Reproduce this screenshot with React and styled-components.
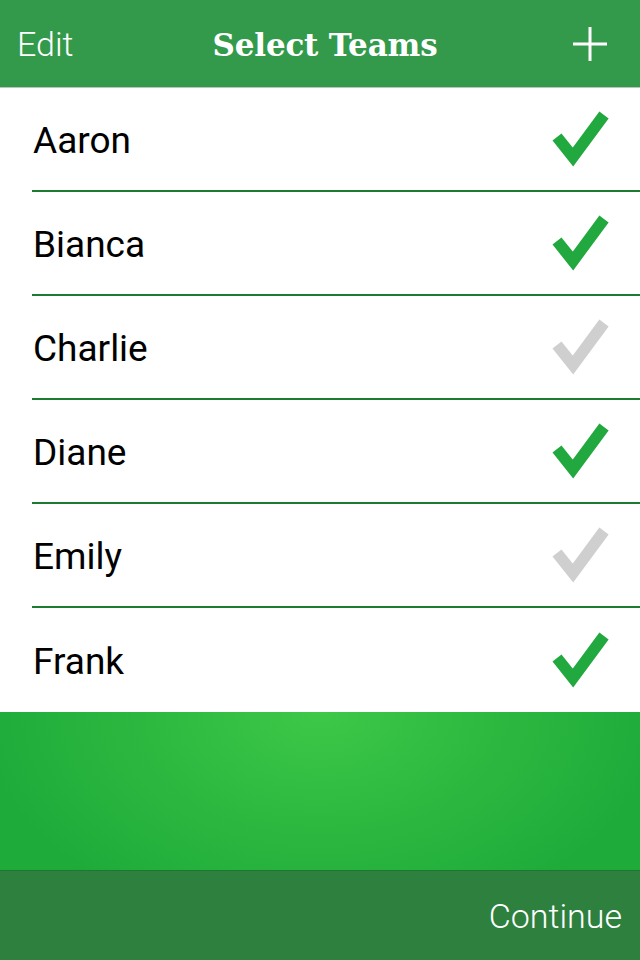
import styled, { createGlobalStyle } from "styled-components";

const GlobalStyle = createGlobalStyle`
  html, body {
    margin: 0;
    padding: 0;
    background: #fff;
  }
  body {
    font-family: Roboto, "Liberation Sans", sans-serif;
  }
`;

const Screen = styled.div`
  width: 640px;
  height: 960px;
  display: flex;
  flex-direction: column;
  overflow: hidden;
`;

const Header = styled.header`
  height: 87px;
  flex: none;
  background: #339a4b;
  border-bottom: 1px solid #b9c4bb;
  display: grid;
  grid-template-columns: 1fr auto 1fr;
  align-items: center;
  padding: 0 17px;
  color: #fff;
`;

const Edit = styled.span`
  font-size: 34px;
  font-weight: 300;
  justify-self: start;
`;

const Title = styled.h1`
  margin: 2px 0 0 10px;
  font-family: "DejaVu Serif", "Liberation Serif", serif;
  font-weight: bold;
  font-size: 31px;
  letter-spacing: -0.2px;
`;

const AddButton = styled.span`
  justify-self: end;
  display: flex;
  margin-right: 15px;
`;

const List = styled.ul`
  list-style: none;
  margin: 0;
  padding: 0;
`;

const Row = styled.li`
  height: ${(p) => (p.$last ? 104 : 102)}px;
  margin-left: 32px;
  padding-right: 28px;
  display: flex;
  align-items: center;
  justify-content: space-between;
  border-bottom: ${(p) => (p.$last ? "none" : "2px solid #1b7b30")};
`;

const Name = styled.span`
  font-size: 37px;
  color: #000;
  margin: 3px 0 0 1px;
`;

const Panel = styled.div`
  height: 158px;
  flex: none;
  background: radial-gradient(
    ellipse 340px 220px at 50% 0%,
    #3dc848 0%,
    #2db940 50%,
    #1eab3a 100%
  );
`;

const Footer = styled.footer`
  flex: 1;
  background: #2d803d;
  border-top: 1px solid #217532;
  display: flex;
  align-items: center;
  justify-content: flex-end;
  padding-right: 19px;
`;

const Continue = styled.span`
  color: #fff;
  font-size: 34px;
  font-weight: 300;
  margin-right: -1px;
`;

const Check = ({ on }) => (
  <svg width="60" height="60" viewBox="0 0 60 60">
    <path
      d="M5 28 L21 48 L52 6"
      fill="none"
      stroke={on ? "#21a83e" : "#cfcfcf"}
      strokeWidth="11.5"
      strokeLinejoin="miter"
    />
  </svg>
);

const Plus = () => (
  <svg width="36" height="36" viewBox="0 0 36 36">
    <path d="M18 1 V35 M1 18 H35" stroke="#fff" strokeWidth="3" />
  </svg>
);

const teams = [
  { name: "Aaron", on: true },
  { name: "Bianca", on: true },
  { name: "Charlie", on: false },
  { name: "Diane", on: true },
  { name: "Emily", on: false },
  { name: "Frank", on: true },
];

export default function App() {
  return (
    <>
      <GlobalStyle />
      <Screen>
        <Header>
          <Edit>Edit</Edit>
          <Title>Select Teams</Title>
          <AddButton>
            <Plus />
          </AddButton>
        </Header>
        <List>
          {teams.map((t, i) => (
            <Row key={t.name} $last={i === teams.length - 1}>
              <Name>{t.name}</Name>
              <Check on={t.on} />
            </Row>
          ))}
        </List>
        <Panel />
        <Footer>
          <Continue>Continue</Continue>
        </Footer>
      </Screen>
    </>
  );
}
